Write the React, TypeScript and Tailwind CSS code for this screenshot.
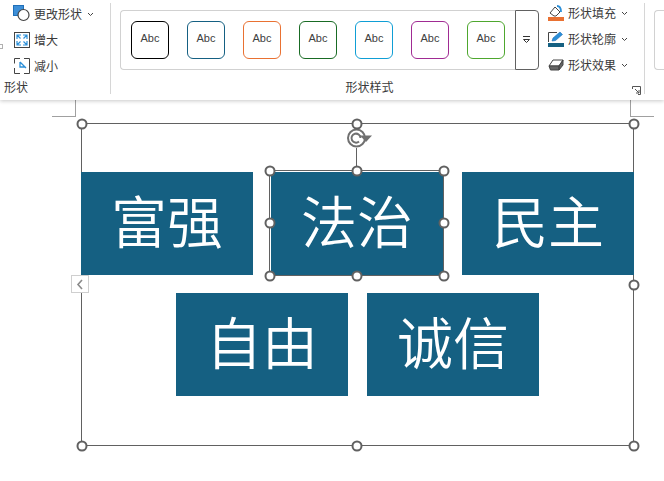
const styles = [
  "border-black",
  "border-[#156082]",
  "border-[#e97132]",
  "border-[#196b24]",
  "border-[#0f9ed5]",
  "border-[#a02b93]",
  "border-[#4ea72e]",
];

const shapes = [
  { text: "富强", cls: "left-[81px] top-[172px] w-[172px]" },
  { text: "法治", cls: "left-[271px] top-[172px] w-[172px]" },
  { text: "民主", cls: "left-[462px] top-[172px] w-[172px]" },
  { text: "自由", cls: "left-[176px] top-[293px] w-[172px]" },
  { text: "诚信", cls: "left-[367px] top-[293px] w-[172px]" },
];

const outerHandles = [
  "left-[81.5px] top-[123.5px]",
  "left-[356.5px] top-[123.5px]",
  "left-[633.5px] top-[123.5px]",
  "left-[633.5px] top-[284.5px]",
  "left-[633.5px] top-[445.5px]",
  "left-[356.5px] top-[445.5px]",
  "left-[81.5px] top-[445.5px]",
];

const innerHandles = [
  "left-[269.5px] top-[170.5px]",
  "left-[356.5px] top-[170.5px]",
  "left-[443.5px] top-[170.5px]",
  "left-[443.5px] top-[222.5px]",
  "left-[443.5px] top-[275.5px]",
  "left-[356.5px] top-[275.5px]",
  "left-[269.5px] top-[275.5px]",
  "left-[269.5px] top-[222.5px]",
];

function Chevron() {
  return (
    <svg width="7" height="5" viewBox="0 0 7 5" className="ml-[5px] mt-[1px]">
      <path d="M1 1l2.500 2.500L6 1" fill="none" stroke="#444" strokeWidth="1" />
    </svg>
  );
}

function ChangeShapeIcon() {
  return (
    <svg width="18" height="18" viewBox="0 0 18 18">
      <rect x="0.5" y="0.5" width="10" height="10" fill="#3d8fd8" stroke="#1f6fb8" />
      <circle cx="10.500" cy="10" r="5.500" fill="#fff" stroke="#444" strokeWidth="1.200" />
    </svg>
  );
}

function GrowIcon() {
  return (
    <svg width="16" height="16" viewBox="0 0 16 16">
      <rect x="0.5" y="0.5" width="15" height="15" fill="#fff" stroke="#444" />
      <path
        d="M3 7V3h4M3 3l3.500 3.500M13 7V3H9M13 3L9.500 6.500M3 9v4h4M3 13l3.500-3.500M13 9v4H9M13 13L9.500 9.500"
        fill="none"
        stroke="#2b8fd8"
        strokeWidth="1.200"
      />
    </svg>
  );
}

function ShrinkIcon() {
  return (
    <svg width="16" height="16" viewBox="0 0 16 16">
      <path d="M6 .5H.5v5M.5 10v5.500H6M10 15.500h5.500V.5H10" fill="none" stroke="#444" />
      <path d="M6 4v5h5M6 4l6 6" fill="none" stroke="#2b8fd8" strokeWidth="1.300" />
    </svg>
  );
}

function FillIcon() {
  return (
    <svg width="16" height="16" viewBox="0 0 16 16">
      <path d="M2 8l5-6 5 5-4 4H6z" fill="#fff" stroke="#444" />
      <path d="M9 1c3 0 4 2 4 6" fill="none" stroke="#2b8fd8" strokeWidth="1.800" />
      <rect x="0" y="12" width="16" height="4" fill="#e97132" />
    </svg>
  );
}

function OutlineIcon() {
  return (
    <svg width="16" height="16" viewBox="0 0 16 16">
      <path d="M.5 11V1.500H9" fill="none" stroke="#444" />
      <path d="M4 10l1-3 7-6 2.500 2.500-7 6z" fill="#2b8fd8" stroke="#1f6fb8" strokeWidth="0.600" />
      <rect x="0" y="12" width="16" height="4" fill="#156082" />
    </svg>
  );
}

function EffectIcon() {
  return (
    <svg width="16" height="14" viewBox="0 0 16 14">
      <path d="M1 8l4-6h10l-4 6z" fill="#fff" stroke="#444" />
      <path d="M1 8h10v4H2.500zM11 12l4-5V2l-4 6z" fill="#666" stroke="#444" />
    </svg>
  );
}

function SmallCommand({ icon, label, chevron }: { icon: React.ReactNode; label: string; chevron?: boolean }) {
  return (
    <div className="flex h-[26px] items-center text-[12px] text-[#3a3a3a]">
      <span className="flex w-[20px] justify-center">{icon}</span>
      <span className="ml-[2px] leading-none">{label}</span>
      {chevron && <Chevron />}
    </div>
  );
}

export default function App() {
  return (
    <div
      className="relative h-[481px] w-[664px] overflow-hidden bg-white"
      style={{ fontFamily: '"Noto Sans CJK SC", "Liberation Sans", sans-serif' }}
    >
      {/* ribbon */}
      <div className="relative z-10 flex h-[100px] bg-white shadow-[0_1px_4px_rgba(0,0,0,0.22)]">
        <div className="relative flex w-[110px] flex-col pl-[4px]">
          <div className="absolute left-0 top-[44px] h-[5px] w-[3px] border border-l-0 border-[#b0b0b0]" />
          <div className="mt-[1px] pl-[8px]">
            <SmallCommand icon={<ChangeShapeIcon />} label="更改形状" chevron />
            <SmallCommand icon={<GrowIcon />} label="增大" />
            <SmallCommand icon={<ShrinkIcon />} label="减小" />
          </div>
          <div className="text-[12px] leading-[16px] text-[#3a3a3a]">形状</div>
        </div>
        <div className="mt-[3px] h-[91px] w-px bg-[#d6d6d6]" />
        <div className="flex w-[533px] flex-col">
          <div className="flex">
            <div className="ml-[9px] mt-[10px] flex h-[60px] w-[395px] items-center gap-[18px] rounded-l-[4px] border border-r-0 border-[#d1d1d1] pl-[10px]">
              {styles.map((s) => (
                <div
                  key={s}
                  className={`flex h-[38px] w-[38px] items-center justify-center rounded-[6px] border pb-[4px] ${s} text-[11px] text-[#404040]`}
                  style={{ fontFamily: '"Liberation Sans", sans-serif' }}
                >
                  Abc
                </div>
              ))}
            </div>
            <div className="mt-[10px] flex h-[60px] w-[24px] items-center justify-center rounded-r-[4px] border border-[#616161] pb-[2px] pr-[2px]">
              <svg width="7" height="7" viewBox="0 0 7 7">
                <path d="M0 .5h7M.5 3.500h6L3.500 6.500z" fill="#fff" stroke="#333" strokeWidth="1" />
              </svg>
            </div>
            <div className="ml-[7px] flex flex-col">
              <SmallCommand icon={<FillIcon />} label="形状填充" chevron />
              <SmallCommand icon={<OutlineIcon />} label="形状轮廓" chevron />
              <SmallCommand icon={<EffectIcon />} label="形状效果" chevron />
            </div>
          </div>
          <div className="relative mt-[1px] text-center text-[12px] leading-[16px] text-[#3a3a3a]">
            <span className="mr-[16px]">形状样式</span>
            <svg width="9" height="9" viewBox="0 0 9 9" className="absolute right-[3px] top-[7px]">
              <path d="M.5 3V.5H8.500V8.500H6M3 3l4 4M7 4v3H4" fill="none" stroke="#555" />
            </svg>
          </div>
        </div>
        <div className="mt-[3px] h-[91px] w-px bg-[#d6d6d6]" />
        <div className="ml-[9px] mt-[10px] h-[60px] flex-1 rounded-l-[4px] border border-r-0 border-[#d1d1d1]" />
      </div>

      {/* crop marks */}
      <div className="absolute left-[75px] top-[100px] h-[16px] w-px bg-[#a0a0a0]" />
      <div className="absolute left-[52px] top-[116px] h-px w-[24px] bg-[#a0a0a0]" />
      <div className="absolute left-[630px] top-[100px] h-[16px] w-px bg-[#a0a0a0]" />
      <div className="absolute left-[630px] top-[116px] h-px w-[24px] bg-[#a0a0a0]" />

      {/* group outline */}
      <div className="absolute left-[81px] top-[123px] h-[323px] w-[553px] border border-[#616161]" />

      {shapes.map((s) => (
        <div
          key={s.text}
          className={`absolute flex h-[103px] items-center justify-center bg-[#156082] pb-[10px] text-[56px] font-[350] leading-none text-white ${s.cls}`}
        >
          {s.text}
        </div>
      ))}

      {/* selected shape */}
      <div className="absolute left-[269px] top-[170px] h-[106px] w-[175px] border border-[#616161]" />
      <div className="absolute left-[356px] top-[148px] h-[22px] w-px bg-[#616161]" />
      <svg width="26" height="24" viewBox="0 0 26 24" className="absolute left-[347px] top-[126px]">
        <circle cx="9.500" cy="12" r="8.500" fill="#fff" stroke="#707070" strokeWidth="2" />
        <path d="M13.500 12a4.500 4.500 0 1 0-1.500 3.500" fill="none" stroke="#707070" strokeWidth="2" />
        <path d="M13 9.500h12l-6 6.500z" fill="#707070" />
      </svg>

      {outerHandles.concat(innerHandles).map((h) => (
        <div
          key={h}
          className={`absolute h-[11px] w-[11px] -translate-x-1/2 -translate-y-1/2 rounded-full border-2 border-[#616161] bg-white ${h}`}
        />
      ))}

      {/* thumbnail pane toggle */}
      <div className="absolute left-[71px] top-[275px] flex h-[18px] w-[18px] items-center justify-center border border-[#cfcfcf] bg-white">
        <svg width="8" height="11" viewBox="0 0 8 11">
          <path d="M6 1L2 5.500 6 10" fill="none" stroke="#8a8a8a" strokeWidth="1.600" />
        </svg>
      </div>
    </div>
  );
}
